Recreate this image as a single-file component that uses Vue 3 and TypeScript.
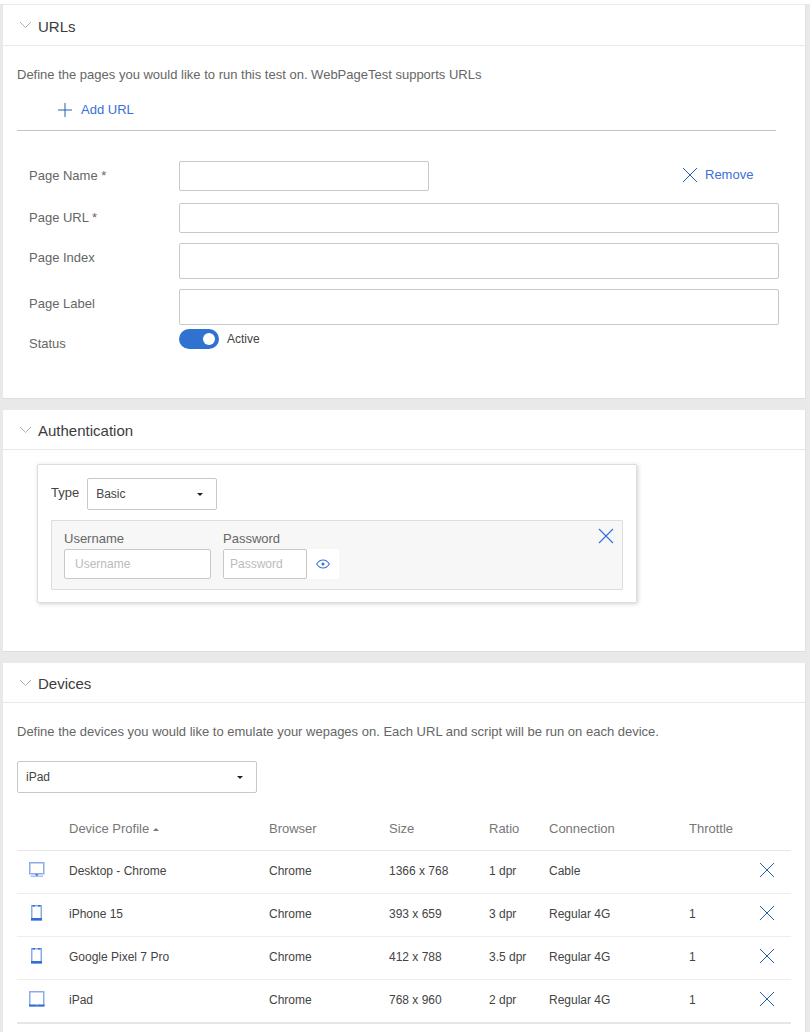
<script setup lang="ts">
interface Device { name: string; size: string; ratio: string; conn: string; throttle: string; kind: 'desktop' | 'phone' | 'tablet' }
const devices: Device[] = [
  { name: 'Desktop - Chrome', size: '1366 x 768', ratio: '1 dpr', conn: 'Cable', throttle: '', kind: 'desktop' },
  { name: 'iPhone 15', size: '393 x 659', ratio: '3 dpr', conn: 'Regular 4G', throttle: '1', kind: 'phone' },
  { name: 'Google Pixel 7 Pro', size: '412 x 788', ratio: '3.5 dpr', conn: 'Regular 4G', throttle: '1', kind: 'phone' },
  { name: 'iPad', size: '768 x 960', ratio: '2 dpr', conn: 'Regular 4G', throttle: '1', kind: 'tablet' },
]
</script>

<template>
  <div class="page">
    <section class="panel urls">
      <header class="head">
        <svg class="chev" width="14" height="8" viewBox="0 0 14 8"><path d="M1 1l5.500 5.500L12 1" /></svg>
        <h2>URLs</h2>
      </header>
      <div class="body">
        <p class="desc">Define the pages you would like to run this test on. WebPageTest supports URLs</p>
        <div class="add">
          <svg width="14" height="14" viewBox="0 0 14 14" class="ic-x"><path d="M7 0v14M0 7h14" /></svg>
          <span class="link">Add URL</span>
        </div>
        <hr class="rule" />
        <div class="form">
          <div class="row r1">
            <label>Page Name *</label>
            <input class="in short" type="text" />
            <div class="remove">
              <svg width="16" height="16" viewBox="0 0 16 16" class="ic-x"><path d="M1 1l14 14M15 1L1 15" /></svg>
              <span class="link">Remove</span>
            </div>
          </div>
          <div class="row r2">
            <label>Page URL *</label>
            <input class="in wide" type="text" />
          </div>
          <div class="row r3">
            <label>Page Index</label>
            <input class="in wide tall" type="text" />
          </div>
          <div class="row r4">
            <label>Page Label</label>
            <input class="in wide tall" type="text" />
          </div>
          <div class="row r5">
            <label>Status</label>
            <span class="toggle"><span class="knob"></span></span>
            <span class="active">Active</span>
          </div>
        </div>
      </div>
    </section>

    <section class="panel auth">
      <header class="head">
        <svg class="chev" width="14" height="8" viewBox="0 0 14 8"><path d="M1 1l5.500 5.500L12 1" /></svg>
        <h2>Authentication</h2>
      </header>
      <div class="card">
        <div class="type-row">
          <span class="type-label">Type</span>
          <div class="select type-select"><span>Basic</span><i class="caret"></i></div>
        </div>
        <div class="creds">
          <div class="field">
            <span class="f-label">Username</span>
            <input class="in cred user" type="text" placeholder="Username" />
          </div>
          <div class="field">
            <span class="f-label">Password</span>
            <div class="pw">
              <input class="in cred pass" type="text" placeholder="Password" />
              <span class="eye">
                <svg width="14" height="10" viewBox="0 0 14 10" fill="none" stroke="#3a70d8" stroke-width="1.1">
                  <path d="M.7 5C2.400 2.200 4.500 1 7 1s4.600 1.200 6.300 4C11.600 7.800 9.500 9 7 9S2.400 7.800.7 5z" />
                  <circle cx="7" cy="5" r="1.500" fill="#3a70d8" stroke="none" />
                </svg>
              </span>
            </div>
          </div>
          <svg class="creds-x" width="16" height="16" viewBox="0 0 16 16"><path d="M1 1l14 14M15 1L1 15" /></svg>
        </div>
      </div>
    </section>

    <section class="panel devices">
      <header class="head">
        <svg class="chev" width="14" height="8" viewBox="0 0 14 8"><path d="M1 1l5.500 5.500L12 1" /></svg>
        <h2>Devices</h2>
      </header>
      <div class="body">
        <p class="desc">Define the devices you would like to emulate your wepages on. Each URL and script will be run on each device.</p>
        <div class="select dev-select"><span>iPad</span><i class="caret"></i></div>
        <table class="tbl">
          <colgroup>
            <col style="width: 52px" /><col style="width: 200px" /><col style="width: 120px" /><col style="width: 100px" />
            <col style="width: 60px" /><col style="width: 140px" /><col style="width: 70px" /><col />
          </colgroup>
          <thead>
            <tr>
              <th></th>
              <th>Device Profile <i class="sort"></i></th>
              <th>Browser</th>
              <th>Size</th>
              <th>Ratio</th>
              <th>Connection</th>
              <th>Throttle</th>
              <th></th>
            </tr>
          </thead>
          <tbody>
            <tr v-for="d in devices" :key="d.name">
              <td class="ic-cell">
                <svg v-if="d.kind === 'desktop'" class="dev-ic" width="16" height="16" viewBox="0 0 16 16" fill="none">
                  <rect x=".75" y=".75" width="14" height="11" stroke="#8aaceb" stroke-width="1.500" />
                  <rect x="6.500" y="12" width="2.500" height="2" fill="#3f78d6" />
                  <rect x="1.500" y="13.500" width="12.500" height="1.500" fill="#a9c2f0" />
                </svg>
                <svg v-else-if="d.kind === 'phone'" class="dev-ic phone" width="11" height="16" viewBox="0 0 11 16" fill="none">
                  <rect x=".75" y=".75" width="9.500" height="14" stroke="#8aaceb" stroke-width="1.500" />
                  <rect x="0" y="13" width="11" height="2.500" fill="#2f6ed2" />
                  <rect x="1.500" y="0" width="2.500" height="1.500" fill="#2f6ed2" />
                  <rect x="7" y="0" width="2.500" height="1.500" fill="#2f6ed2" />
                </svg>
                <svg v-else class="dev-ic" width="16" height="16" viewBox="0 0 16 16" fill="none">
                  <rect x=".75" y=".75" width="14" height="14" stroke="#8aaceb" stroke-width="1.500" />
                  <rect x="0" y="13.500" width="15.500" height="2" fill="#2f6ed2" />
                  <rect x="7" y="13.500" width="1.500" height="1" fill="#a9c2f0" />
                </svg>
              </td>
              <td>{{ d.name }}</td>
              <td>Chrome</td>
              <td>{{ d.size }}</td>
              <td>{{ d.ratio }}</td>
              <td>{{ d.conn }}</td>
              <td>{{ d.throttle }}</td>
              <td class="x-cell">
                <svg width="16" height="16" viewBox="0 0 16 16" class="ic-x"><path d="M1 1l14 14M15 1L1 15" /></svg>
              </td>
            </tr>
          </tbody>
        </table>
      </div>
    </section>
  </div>
</template>

<style>
html, body { background: #fff; overflow: hidden; }
</style>

<style scoped>
.page {
  margin-top: 4px;
  height: 1028px;
  box-sizing: border-box;
  padding: 1px 5px 0 3px;
  background: #e9e9e9;
  overflow: hidden;
  font-family: "Liberation Sans", Arial, sans-serif;
  font-size: 13px;
  color: #666;
}
.panel { background: #fff; margin-bottom: 12px; box-shadow: 0 1px 0 #ddd, 1px 0 0 #e2e2e2; }
.urls { height: 393px; }
.auth { height: 241px; }
.devices { height: 380px; }
.head {
  height: 39px;
  display: flex;
  align-items: center;
  padding-left: 16px;
  border-bottom: 1px solid #e9e9e9;
}
.urls .head { height: 40px; }
.chev { fill: none; stroke: #b0b0b0; stroke-width: 1; flex: none; }
.head h2 { margin: 2px 0 0 5px; font-size: 15px; font-weight: 400; color: #3c3c3c; }
.body { padding: 0 14px; }
.desc { margin: 0; line-height: 16px; font-size: 13px; color: #666; padding-top: 21px; }
.add { display: flex; align-items: center; gap: 9px; padding-left: 41px; margin-top: 19px; height: 16px; }
.link { color: #3a70d8; font-size: 13px; line-height: 16px; }
.ic-x { fill: none; stroke: #2160b4; stroke-width: 1; flex: none; }
.rule { border: 0; border-top: 1px solid #c4c4c4; margin: 12px 15px 0 0; }
.form { margin-top: 30px; }
.row { display: flex; align-items: flex-start; }
.row label { width: 150px; padding-left: 12px; flex: none; font-size: 13px; line-height: 16px; color: #666; padding-top: 7px; }
.in {
  display: block;
  box-sizing: border-box;
  border: 1px solid #c8c8c8;
  border-radius: 2px;
  background: #fff;
  padding: 0;
  margin: 0;
  outline: none;
  font-family: inherit;
}
.short { width: 250px; height: 30px; }
.wide { width: 600px; height: 30px; }
.wide.tall { height: 36px; }
.r2 { margin-top: 12px; }
.r3 { margin-top: 10px; }
.r4 { margin-top: 10px; }
.r5 { margin-top: 4px; }
.remove { display: flex; align-items: center; gap: 7px; margin: 6px 0 0 253px; }
.toggle { width: 40px; height: 20px; border-radius: 10px; background: #3072d0; position: relative; flex: none; }
.knob { position: absolute; width: 12px; height: 12px; border-radius: 50%; background: #fff; right: 4px; top: 4px; }
.active { margin-left: 8px; font-size: 12px; line-height: 20px; color: #444; }

.card {
  margin: 14px 0 0 34px;
  width: 600px;
  height: 139px;
  box-sizing: border-box;
  border: 1px solid #ddd;
  border-radius: 1px;
  box-shadow: 1px 1px 4px rgba(0, 0, 0, .18);
  padding: 13px 13px 0;
}
.type-row { display: flex; align-items: center; gap: 8px; }
.type-label { color: #444; font-size: 13px; margin-top: -3px; }
.select {
  display: flex;
  align-items: center;
  justify-content: space-between;
  box-sizing: border-box;
  border: 1px solid #c8c8c8;
  border-radius: 2px;
  background: #fff;
  font-size: 12px;
  color: #444;
}
.type-select { width: 130px; height: 32px; padding: 0 13px 0 8px; }
.dev-select { width: 240px; height: 32px; margin-top: 21px; padding: 0 13px 0 8px; }
.caret { width: 0; height: 0; border: 3px solid transparent; border-top: 3px solid #222; border-bottom: 0; }
.creds {
  position: relative;
  margin-top: 10px;
  height: 70px;
  box-sizing: border-box;
  border: 1px solid #ddd;
  border-radius: 1px;
  background: #f7f7f7;
  padding: 10px 12px 0;
  display: flex;
  gap: 12px;
}
.field { display: flex; flex-direction: column; }
.f-label { font-size: 13px; line-height: 15px; color: #666; margin-bottom: 3px; }
.cred { height: 30px; font-size: 12px; background: #fff; }
.cred::placeholder { color: #bbb; opacity: 1; }
.user { width: 147px; padding-left: 10px; }
.pass { width: 84px; padding-left: 6px; }
.pw { display: flex; }
.eye { width: 32px; height: 30px; background: #fff; display: flex; align-items: center; justify-content: center; }
.creds-x { position: absolute; right: 8px; top: 7px; fill: none; stroke: #3a70d8; stroke-width: 1.200; }

.tbl { table-layout: fixed; width: 774px; border-collapse: collapse; margin-top: 14px; }
.tbl th {
  height: 43px;
  padding: 0;
  text-align: left;
  font-weight: 400;
  font-size: 13px;
  color: #777;
  border-bottom: 1px solid #e6e6e6;
}
.sort { display: inline-block; width: 0; height: 0; border: 3px solid transparent; border-bottom: 3px solid #777; border-top: 0; vertical-align: 2px; }
.tbl td {
  height: 40px;
  padding: 0 0 2px;
  font-size: 12px;
  color: #444;
  border-bottom: 1px solid #eee;
}
.tbl tbody tr:last-child td { border-bottom: 2px solid #e6e6e6; }
.dev-ic { display: block; margin-left: 12px; margin-top: -3px; }
.dev-ic.phone { margin-left: 14px; }
.x-cell svg { display: block; margin-top: -3px; }
</style>
